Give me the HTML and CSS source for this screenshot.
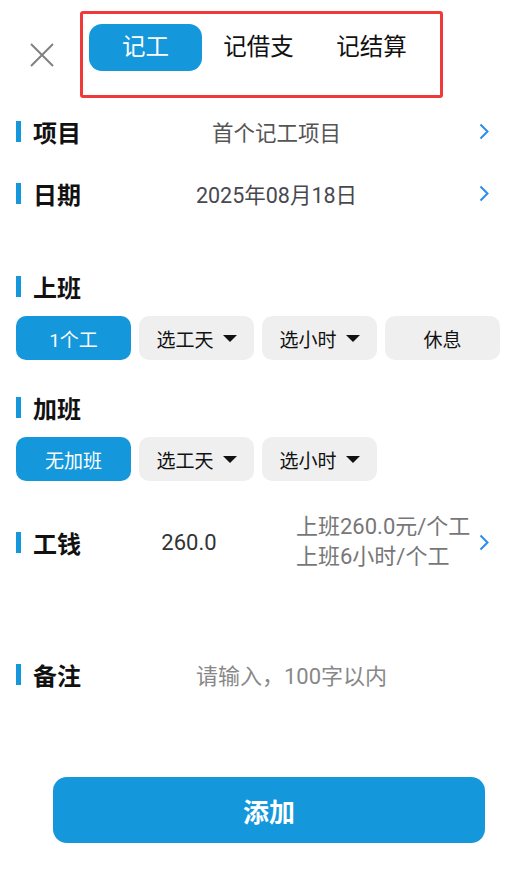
FILE: index.html
```html
<!DOCTYPE html>
<html>
<head>
  <title>记工</title>
  <meta charset="utf-8">
  <link rel="stylesheet" href="styles.css">
</head>
<body>
  <div class="header">
    <div class="close">
      <svg width="24" height="24" viewBox="0 0 24 24">
        <path d="M1 1 L23 23 M23 1 L1 23" stroke="#808080" stroke-width="2" fill="none"/>
      </svg>
    </div>
    <div class="tabs">
      <div class="tab active">记工</div>
      <div class="tab">记借支</div>
      <div class="tab">记结算</div>
    </div>
  </div>

  <div class="row">
    <div class="label">项目</div>
    <div class="value">首个记工项目</div>
    <svg class="chevron" width="10" height="17" viewBox="0 0 10 17">
      <path d="M1.5 1.5 L8.5 8.5 L1.5 15.5" stroke="#2a8cf0" stroke-width="2" fill="none"/>
    </svg>
  </div>

  <div class="row">
    <div class="label">日期</div>
    <div class="value date">2025年08月18日</div>
    <svg class="chevron" width="10" height="17" viewBox="0 0 10 17">
      <path d="M1.5 1.5 L8.5 8.5 L1.5 15.5" stroke="#2a8cf0" stroke-width="2" fill="none"/>
    </svg>
  </div>

  <div class="section work">
    <div class="label">上班</div>
    <div class="options">
      <div class="option selected">1个工</div>
      <div class="option">选工天<span class="caret"></span></div>
      <div class="option">选小时<span class="caret"></span></div>
      <div class="option">休息</div>
    </div>
  </div>

  <div class="section overtime">
    <div class="label">加班</div>
    <div class="options">
      <div class="option selected">无加班</div>
      <div class="option">选工天<span class="caret"></span></div>
      <div class="option">选小时<span class="caret"></span></div>
    </div>
  </div>

  <div class="row wage">
    <div class="label">工钱</div>
    <div class="value">260.0</div>
    <div class="wage-info">
      <div>上班260.0元/个工</div>
      <div>上班6小时/个工</div>
    </div>
    <svg class="chevron" width="10" height="17" viewBox="0 0 10 17">
      <path d="M1.5 1.5 L8.5 8.5 L1.5 15.5" stroke="#2a8cf0" stroke-width="2" fill="none"/>
    </svg>
  </div>

  <div class="row note">
    <div class="label">备注</div>
    <div class="value placeholder">请输入，100字以内</div>
  </div>

  <button class="submit">添加</button>
</body>
</html>
```

FILE: styles.css
```css
body {
  margin: 0;
  width: 513px;
  font-family: Roboto, "Noto Sans CJK SC", sans-serif;
  color: #111;
  background: #fff;
}

/* top bar */

.header {
  display: flex;
  align-items: flex-start;
  padding-top: 11px;
  height: 89px;
}

.close {
  width: 80px;
  height: 87px;
  padding-left: 3px;
  box-sizing: border-box;
  display: flex;
  align-items: center;
  justify-content: center;
}

.tabs {
  width: 363px;
  height: 87px;
  box-sizing: border-box;
  border: 3px solid #f03a3a;
  border-radius: 3px;
  padding: 10px 0 0 6px;
  display: flex;
  align-items: flex-start;
}

.tab {
  width: 113px;
  height: 47px;
  line-height: 46px;
  text-align: center;
  font-size: 23.5px;
  color: #111;
  border-radius: 13px;
}

.tab.active {
  background-color: #1497db;
  color: #fff;
}

/* label with blue bar */

.label {
  display: flex;
  align-items: center;
  font-size: 24px;
  font-weight: bold;
  color: #111;
  height: 30px;
  width: 66px;
  white-space: nowrap;
  flex-shrink: 0;
}

.label::before {
  content: "";
  width: 5px;
  height: 21px;
  background-color: #1497db;
  margin-right: 12px;
}

/* rows */

.row {
  display: flex;
  align-items: center;
  height: 62px;
  padding: 0 24px 0 16px;
}

.value {
  flex: 1;
  text-align: center;
  font-size: 21.5px;
  color: #555;
}

.value.date {
  color: #484850;
}

.chevron {
  margin-left: 8px;
  flex-shrink: 0;
}

/* option groups */

.section {
  padding: 0 13px 0 16px;
}

.section.work {
  margin-top: 47px;
}

.section.overtime {
  margin-top: 32px;
}

.options {
  display: flex;
  gap: 8px;
  margin-top: 15px;
}

.option {
  width: 115px;
  height: 44px;
  border-radius: 10px;
  background-color: #efefef;
  display: flex;
  align-items: center;
  justify-content: center;
  font-size: 19px;
  color: #111;
}

.option.selected {
  background-color: #1497db;
  color: #fff;
}

.caret {
  width: 0;
  height: 0;
  margin-left: 9px;
  border-left: 7px solid transparent;
  border-right: 7px solid transparent;
  border-top: 7px solid #111;
}

/* wage */

.row.wage {
  margin-top: 31px;
  height: 60px;
}

.row.wage .value {
  color: #333;
  font-size: 22px;
}

.wage-info {
  width: 175px;
  font-size: 22px;
  line-height: 30px;
  color: #777;
  white-space: nowrap;
}

.row.note {
  margin-top: 87px;
  height: 30px;
  padding-right: 12px;
}

.placeholder {
  color: #888;
  font-size: 22px;
}

/* bottom button */

.submit {
  display: block;
  margin: 88px 0 0 53px;
  width: 432px;
  height: 66px;
  border: none;
  border-radius: 14px;
  background-color: #1497db;
  color: #fff;
  font-family: Roboto, "Noto Sans CJK SC", sans-serif;
  font-size: 26px;
  font-weight: bold;
  cursor: pointer;
}
```
